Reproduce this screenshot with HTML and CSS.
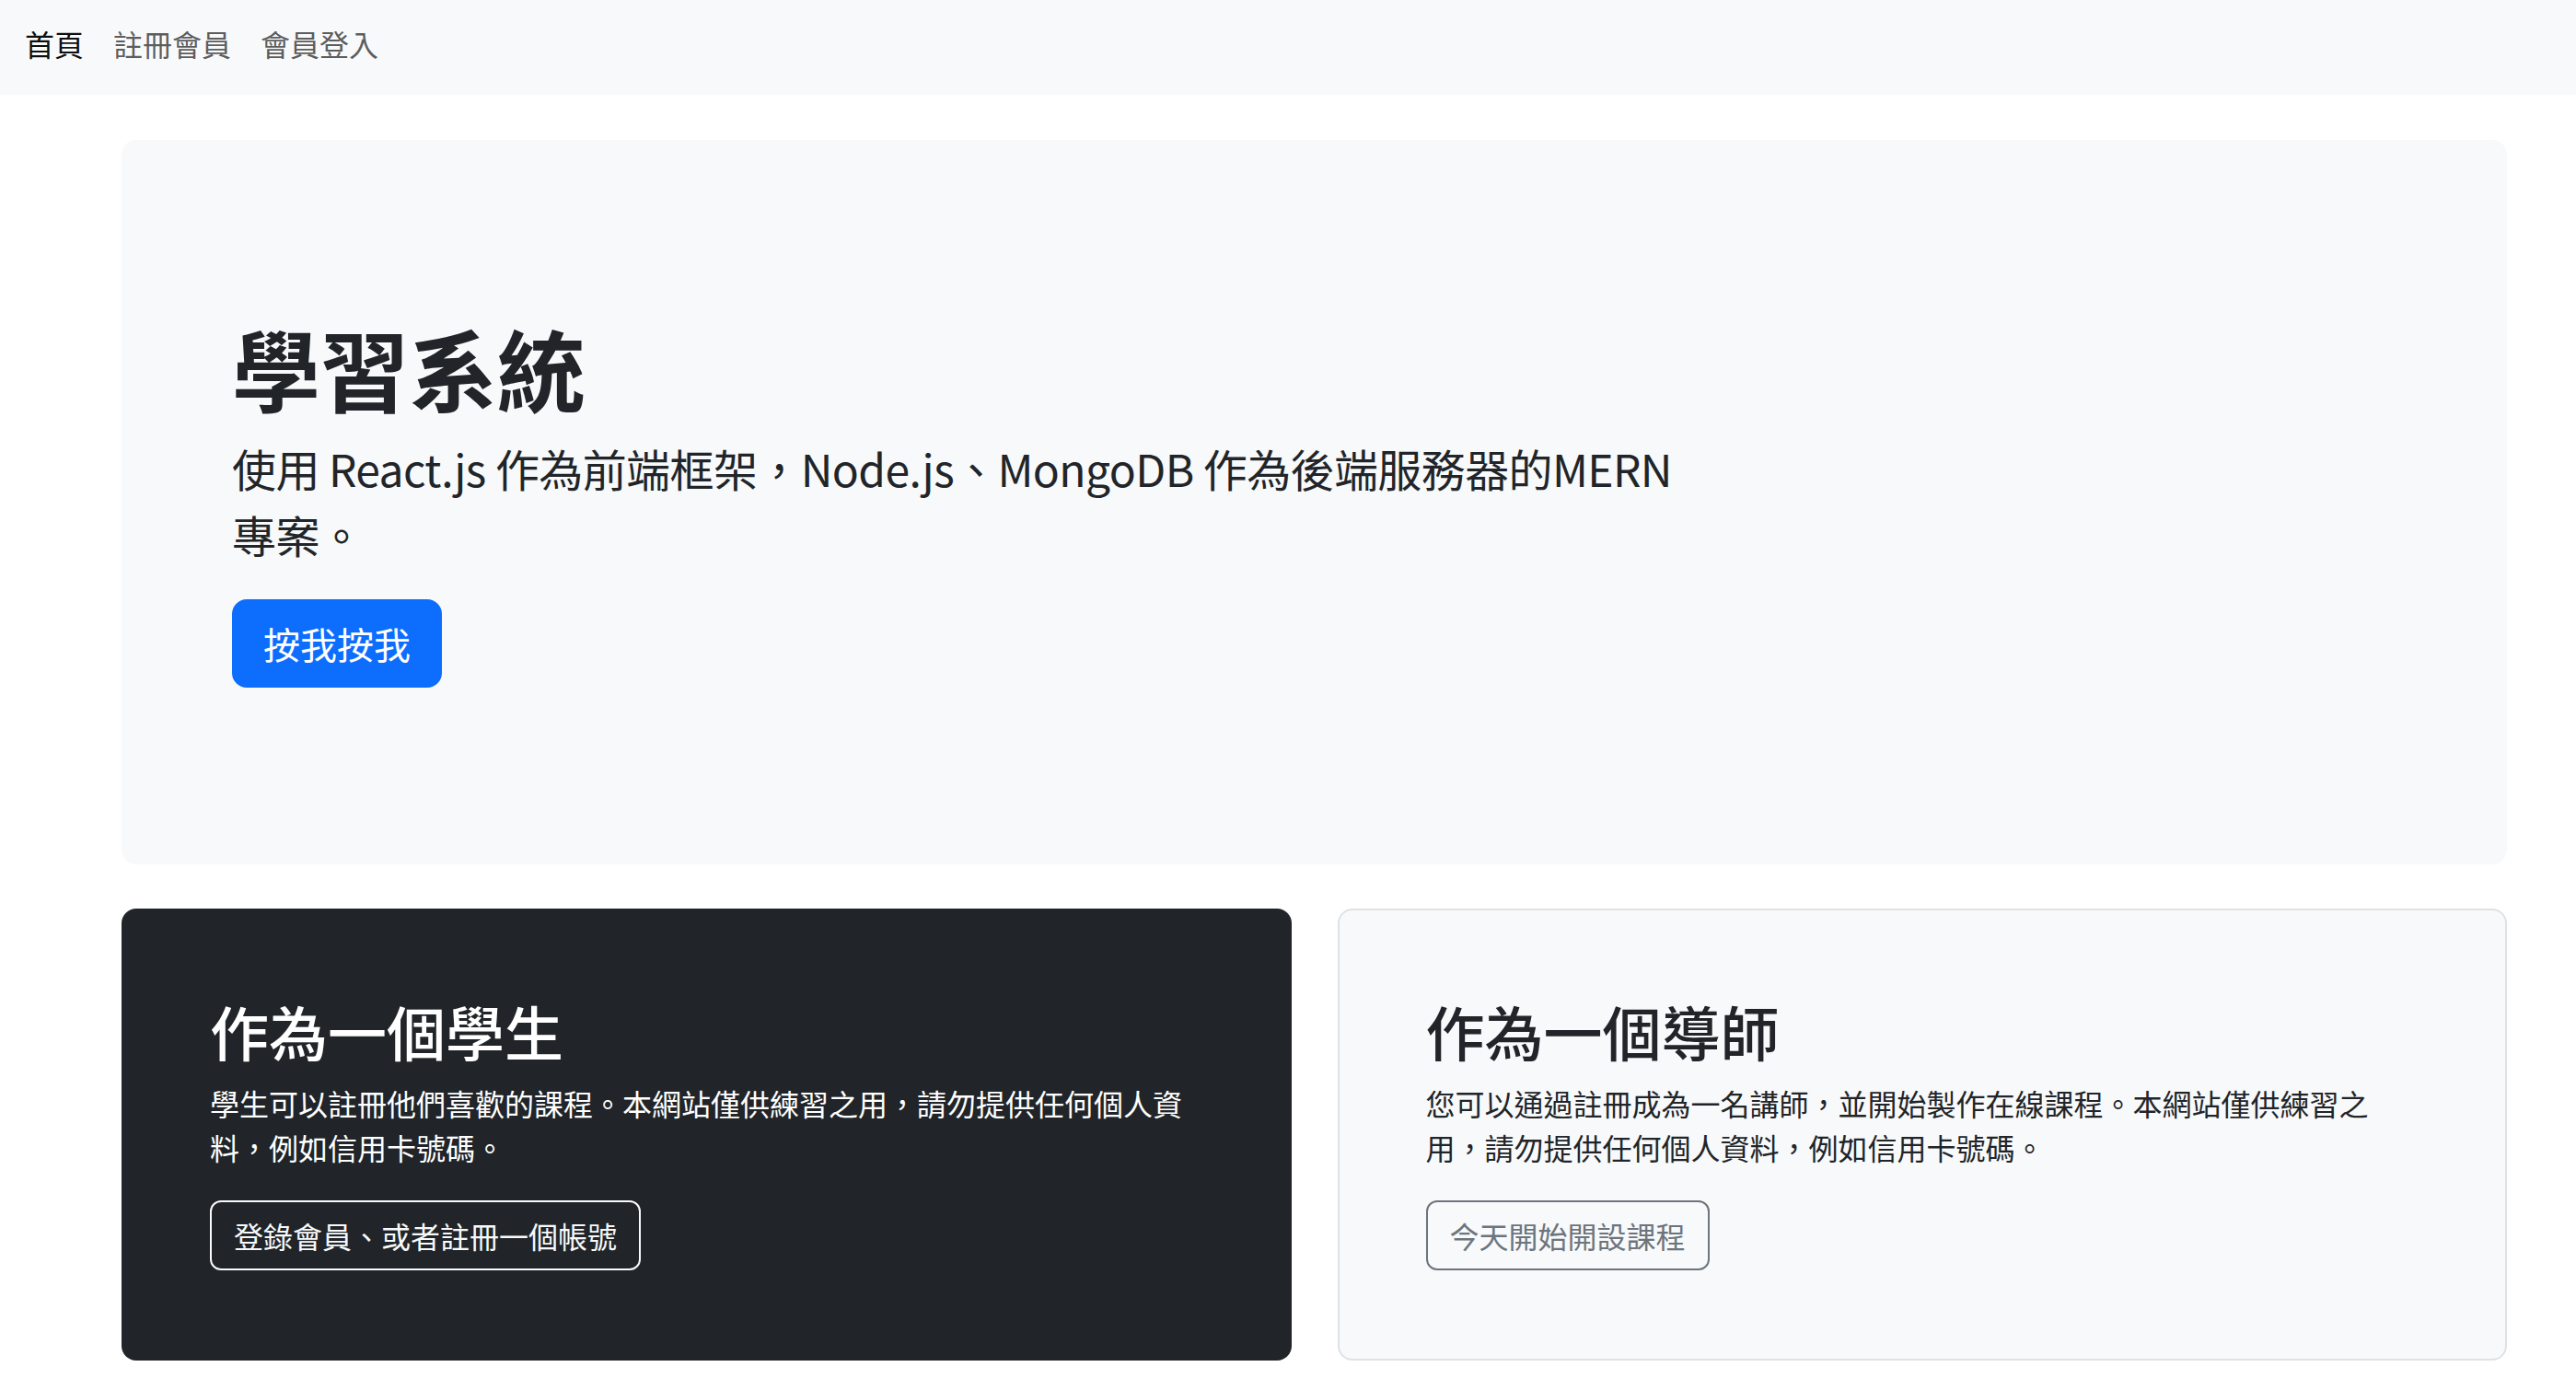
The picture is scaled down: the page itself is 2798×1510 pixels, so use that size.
FILE: index.html
```html
<!DOCTYPE html>
<html lang="zh-Hant">
<head>
<meta charset="utf-8">
<title>學習系統</title>
<link rel="stylesheet" href="styles.css">
</head>
<body>
<nav class="navbar">
  <ul class="nav-list">
    <li><a class="nav-link active" href="#">首頁</a></li>
    <li><a class="nav-link" href="#">註冊會員</a></li>
    <li><a class="nav-link" href="#">會員登入</a></li>
  </ul>
</nav>
<main class="container">
  <section class="hero">
    <div class="hero-inner">
      <h1 class="hero-title">學習系統</h1>
      <p class="hero-text">使用 React.js 作為前端框架，Node.js、MongoDB 作為後端服務器的MERN專案。</p>
      <button class="btn btn-primary btn-lg" type="button">按我按我</button>
    </div>
  </section>
  <div class="cards">
    <div class="card card-dark">
      <h2 class="card-title">作為一個學生</h2>
      <p class="card-text">學生可以註冊他們喜歡的課程。本網站僅供練習之用，請勿提供任何個人資料，例如信用卡號碼。</p>
      <button class="btn btn-outline-light" type="button">登錄會員、或者註冊一個帳號</button>
    </div>
    <div class="card card-light">
      <h2 class="card-title">作為一個導師</h2>
      <p class="card-text">您可以通過註冊成為一名講師，並開始製作在線課程。本網站僅供練習之用，請勿提供任何個人資料，例如信用卡號碼。</p>
      <button class="btn btn-outline-secondary" type="button">今天開始開設課程</button>
    </div>
  </div>
</main>
</body>
</html>
```

FILE: styles.css
```css
* {
  box-sizing: border-box;
}

html, body {
  margin: 0;
  padding: 0;
  background: #ffffff;
}

body {
  font-family: "Noto Sans CJK TC", "Noto Sans", sans-serif;
  font-size: 32px;
  line-height: 1.5;
  color: #212529;
  overflow: hidden;
}

/* Navbar */
.navbar {
  background: #f8f9fa;
  height: 103px;
  padding: 23px 0 0 27px;
}

.nav-list {
  list-style: none;
  margin: 0;
  padding: 0;
  display: flex;
  gap: 32px;
}

.nav-link {
  display: block;
  text-decoration: none;
  color: rgba(0, 0, 0, 0.65);
  line-height: 48px;
}

.nav-link.active {
  color: rgba(0, 0, 0, 0.95);
}

/* Main container */
.container {
  width: 2591px;
  margin-left: 132px;
  padding-top: 49px;
}

/* Hero */
.hero {
  background: #f8f9fa;
  border-radius: 16px;
  padding: 96px;
  margin-bottom: 48px;
}

.hero-inner {
  padding: 93px 24px 96px;
}

.hero-title {
  margin: 0 0 16px;
  font-size: 96px;
  font-weight: 700;
  line-height: 1.2;
  color: #212529;
}

.hero-text {
  width: 1567px;
  margin: 0 0 35px;
  font-size: 48px;
  line-height: 1.5;
  letter-spacing: -0.6px;
}

/* Buttons */
.btn {
  display: inline-block;
  font-family: inherit;
  font-size: 32px;
  line-height: 1.5;
  padding: 12px 24px;
  border: 2px solid transparent;
  border-radius: 12px;
  background: transparent;
  cursor: pointer;
}

.btn-lg {
  font-size: 40px;
  padding: 16px 32px;
  border-radius: 16px;
}

.btn-primary {
  background: #0d6efd;
  border-color: #0d6efd;
  color: #ffffff;
}

.btn-outline-light {
  color: #f8f9fa;
  border-color: #f8f9fa;
}

.btn-outline-secondary {
  color: #6c757d;
  border-color: #6c757d;
}

/* Cards */
.cards {
  display: grid;
  grid-template-columns: 1fr 1fr;
  gap: 50px;
}

.card {
  border-radius: 16px;
  padding: 94px 96px 98px;
}

.card-dark {
  background: #212529;
  color: #ffffff;
}

.card-light {
  background: #f8f9fa;
  border: 2px solid #dee2e6;
  padding: 92px 94px 96px;
}

.card-title {
  margin: 0 0 16px;
  font-size: 64px;
  font-weight: 500;
  line-height: 1.2;
}

.card-text {
  margin: 0 0 34px;
  font-size: 32px;
  line-height: 1.5;
}
```
